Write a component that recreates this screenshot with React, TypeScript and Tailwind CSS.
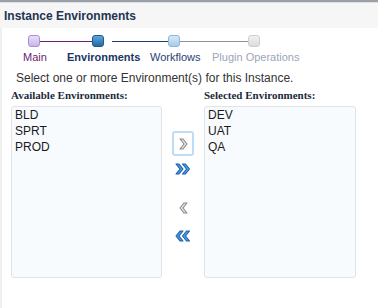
import React from 'react';

const AVAILABLE = ['BLD', 'SPRT', 'PROD'];
const SELECTED = ['DEV', 'UAT', 'QA'];

const Chevron = ({ dir, color }: { dir: 'right' | 'left'; color: 'gray' | 'blue' }) => {
  const fill = color === 'gray' ? '#e4e4e4' : '#4e9de2';
  const stroke = color === 'gray' ? '#888888' : '#1c5ea8';
  const pts = dir === 'right' ? '0.5,0.5 3.5,0.5 7.5,5.5 3.5,10.5 0.5,10.5 4.5,5.5' : '7.5,0.5 4.5,0.5 0.5,5.5 4.5,10.5 7.5,10.5 3.5,5.5';
  return <polygon points={pts} fill={fill} stroke={stroke} strokeWidth="1.1" strokeLinejoin="round" />;
};

const Arrow = ({ dir, double, color }: { dir: 'right' | 'left'; double?: boolean; color: 'gray' | 'blue' }) => (
  <svg width={double ? 16 : 9} height="12" viewBox={double ? '0 0 16 12' : '0 0 9 12'}>
    <g transform="translate(0.5,0.5)">
      <Chevron dir={dir} color={color} />
    </g>
    {double && (
      <g transform="translate(7,0.5)">
        <Chevron dir={dir} color={color} />
      </g>
    )}
  </svg>
);

const ListBox = ({ items }: { items: string[] }) => (
  <div className="h-[172px] rounded-[3px] border border-[#dfe4ea] bg-[#f7fbfe] px-[3px]">
    {items.map((it) => (
      <div key={it} className="text-[12px] leading-[16px] text-[#1a1a1a]">
        {it}
      </div>
    ))}
  </div>
);

export default function App() {
  return (
    <div className="h-[308px] w-[378px] overflow-hidden bg-white font-['Liberation_Sans',Arial,sans-serif]">
      {/* header */}
      <div className="h-[2px] bg-[#9ca1a7]" />
      <div className="flex h-[26px] items-center border-t border-[#dde1e5] bg-[#f6f6f6] pl-[4px] text-[12px] font-bold text-[#1e3550]">
        Instance Environments
      </div>

      <div className="h-[280px] border-l-2 border-[#f0f0f0]">
        {/* stepper */}
        <div className="flex items-center pl-[26px] pt-[7px]">
          <div className="h-[12px] w-[12px] rounded-[3px] border border-[#ab8fd4] bg-gradient-to-b from-[#eadff7] to-[#cbb3ea]" />
          <div className="h-px w-[52px] bg-[#6e1f70]" />
          <div className="h-[12px] w-[12px] rounded-[3px] border border-[#1b5a90] bg-gradient-to-b from-[#5ea7dd] to-[#1f6aa6]" />
          <div className="w-[8px]" />
          <div className="h-px w-[56px] bg-[#1f3a6e]" />
          <div className="h-[12px] w-[12px] rounded-[3px] border border-[#8eb6da] bg-gradient-to-b from-[#d6e8f7] to-[#a9cbea]" />
          <div className="h-px w-[68px] bg-[#8d939c]" />
          <div className="h-[12px] w-[12px] rounded-[3px] border border-[#cfcfcf] bg-gradient-to-b from-[#f1f1f1] to-[#dcdcdc]" />
        </div>
        <div className="flex pl-[21px] pt-[3px] text-[11px] leading-[14px]">
          <div className="w-[44px] text-[#6a1d6c]">Main</div>
          <div className="w-[83px] font-bold text-[#1b3566]">Environments</div>
          <div className="w-[62px] text-[#2b4272]">Workflows</div>
          <div className="text-[#9ca5b8]">Plugin Operations</div>
        </div>

        <div className="pl-[14px] pt-[7px] text-[12px] leading-[14px] text-[#333]">
          Select one or more Environment(s) for this Instance.
        </div>

        {/* shuttle */}
        <div className="flex pl-[9px] pt-[3px]">
          <div className="w-[151px]">
            <div className="mb-[4px] font-['Liberation_Serif',serif] text-[11px] font-bold leading-[14px] text-[#1b2a3a]">
              Available Environments:
            </div>
            <ListBox items={AVAILABLE} />
          </div>
          <div className="flex w-[42px] flex-col items-center pt-[43px]">
            <div className="flex h-[25px] w-[22px] items-center justify-center rounded-[3px] border-2 border-[#bcdcf7] bg-white">
              <Arrow dir="right" color="gray" />
            </div>
            <div className="mt-[7px]">
              <Arrow dir="right" double color="blue" />
            </div>
            <div className="mt-[27px]">
              <Arrow dir="left" color="gray" />
            </div>
            <div className="mt-[16px]">
              <Arrow dir="left" double color="blue" />
            </div>
          </div>
          <div className="w-[152px]">
            <div className="mb-[4px] font-['Liberation_Serif',serif] text-[11px] font-bold leading-[14px] text-[#1b2a3a]">
              Selected Environments:
            </div>
            <ListBox items={SELECTED} />
          </div>
        </div>
      </div>
    </div>
  );
}
